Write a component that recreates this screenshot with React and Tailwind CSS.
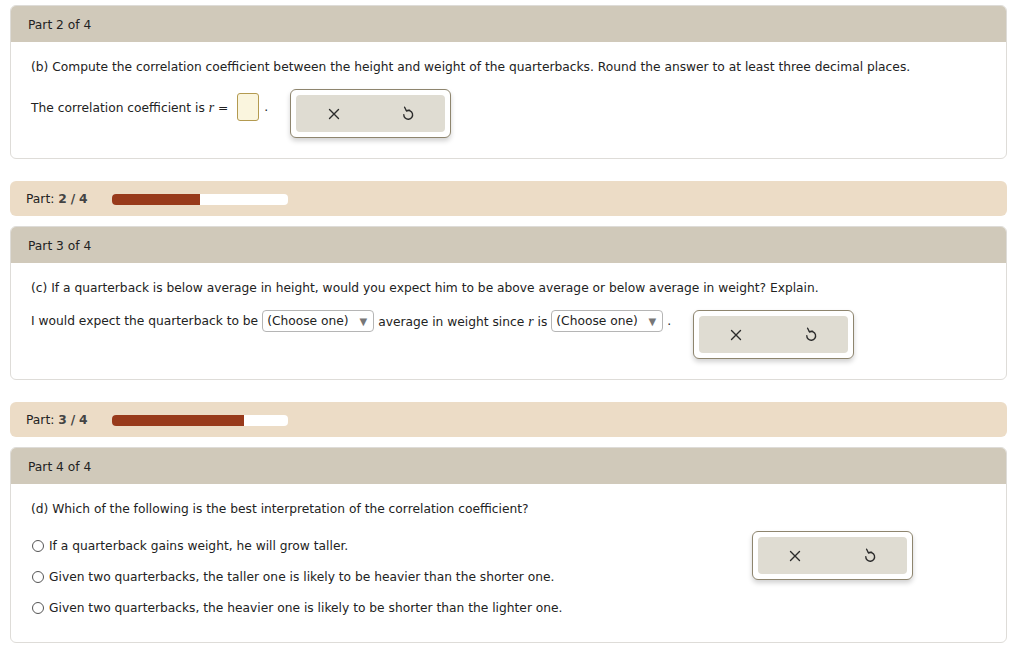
import React from 'react';

const font = { fontFamily: '"DejaVu Sans", Verdana, sans-serif' };

function XIcon() {
    return (
        <svg width="12" height="12" viewBox="0 0 12 12" fill="none" stroke="#2b2b2b" strokeWidth="1.4" strokeLinecap="round">
            <path d="M1.5 1.5 L10.5 10.5 M10.5 1.5 L1.5 10.5" />
        </svg>
    );
}

function UndoIcon() {
    return (
        <svg width="12" height="15" viewBox="0 0 12 15" fill="none" stroke="#2b2b2b" strokeWidth="1.4" strokeLinecap="round" strokeLinejoin="round">
            <path d="M4.4 4.8 A4.4 4.4 0 1 1 1.8 8.6" />
            <path d="M2.6 1.2 L4.4 4.8 L7.6 4.2" />
        </svg>
    );
}

function ActionPanel() {
    return (
        <div className="w-[161px] h-[49px] shrink-0 rounded-md border border-[#8e856e] bg-white p-[5px] shadow-[0_3px_5px_rgba(0,0,0,0.18)]">
            <div className="h-full rounded-sm bg-[#dfdcd2] flex">
                <button className="w-1/2 flex items-center justify-center"><XIcon /></button>
                <button className="w-1/2 flex items-center justify-center"><UndoIcon /></button>
            </div>
        </div>
    );
}

function Card({ title, children }) {
    return (
        <div className="rounded-md border border-[#dedcd8] overflow-hidden bg-white">
            <div className="h-[36px] bg-[#d0c9ba] flex items-center px-[17px] pt-[2px] text-[#222]">{title}</div>
            <div className="px-[20px]">{children}</div>
        </div>
    );
}

function Progress({ n, pct }) {
    return (
        <div className="h-[35px] rounded-md bg-[#ecdcc6] flex items-center px-[16px] pt-[1px] text-[#222]">
            <span className="w-[86px]">Part: <span className="font-bold text-[#444]">{n}</span> <span className="font-bold text-[#444]">/</span> <span className="font-bold text-[#444]">4</span></span>
            <div className="w-[176px] h-[11px] rounded-sm bg-white overflow-hidden">
                <div className="h-full bg-[#983a1b]" style={{ width: pct + '%' }} />
            </div>
        </div>
    );
}

function Select() {
    return (
        <span className="inline-flex items-center justify-between w-[112px] h-[22px] border border-[#b5b5b5] rounded-sm px-[4px] mx-[4px] text-[#222] bg-white">
            <span>(Choose one)</span>
            <span className="text-[#777] text-[10px] mr-[2px]">▼</span>
        </span>
    );
}

const R = () => <span className="italic text-[14px]" style={{ fontFamily: '"Liberation Serif", serif' }}>r</span>;

function Radio({ children }) {
    return (
        <div className="flex items-center h-[16px]">
            <span className="w-[12px] h-[12px] rounded-full border border-[#555] bg-white mr-[5px]" />
            <span>{children}</span>
        </div>
    );
}

export default function App() {
    return (
        <div className="bg-white min-h-[661px] pl-[10px] pr-[17px] pt-[5px] text-[12.25px] text-[#222]" style={font}>
            <Card title="Part 2 of 4">
                <div className="pt-[17px] leading-[16px]">(b) Compute the correlation coefficient between the height and weight of the quarterbacks. Round the answer to at least three decimal places.</div>
                <div className="flex items-start pt-[14px] pb-[20px]">
                    <div className="flex items-center mt-[4px]">
                        <span>The correlation coefficient is <R /> =</span>
                        <span className="w-[22px] h-[28px] ml-[9px] rounded-[3px] border border-[#b39a50] bg-[#faf5de]" />
                        <span className="ml-[5px]">.</span>
                    </div>
                    <div className="ml-[22px]"><ActionPanel /></div>
                </div>
            </Card>

            <div className="mt-[22px]"><Progress n="2" pct={50} /></div>

            <div className="mt-[10px]">
                <Card title="Part 3 of 4">
                    <div className="pt-[17px] leading-[16px]">(c) If a quarterback is below average in height, would you expect him to be above average or below average in weight? Explain.</div>
                    <div className="flex items-start pt-[14px] pb-[20px]">
                        <div className="flex items-center">
                            <span>I would expect the quarterback to be</span>
                            <Select />
                            <span>average in weight since <R /> is</span>
                            <Select />
                            <span>.</span>
                        </div>
                        <div className="ml-[22px]"><ActionPanel /></div>
                    </div>
                </Card>
            </div>

            <div className="mt-[22px]"><Progress n="3" pct={75} /></div>

            <div className="mt-[10px]">
                <Card title="Part 4 of 4">
                    <div className="pt-[17px] leading-[16px]">(d) Which of the following is the best interpretation of the correlation coefficient?</div>
                    <div className="flex items-start pt-[14px] pb-[26px]">
                        <div className="w-[721px] flex flex-col gap-[15px] mt-[7px] pl-[1px]">
                            <Radio>If a quarterback gains weight, he will grow taller.</Radio>
                            <Radio>Given two quarterbacks, the taller one is likely to be heavier than the shorter one.</Radio>
                            <Radio>Given two quarterbacks, the heavier one is likely to be shorter than the lighter one.</Radio>
                        </div>
                        <ActionPanel />
                    </div>
                </Card>
            </div>
        </div>
    );
}
